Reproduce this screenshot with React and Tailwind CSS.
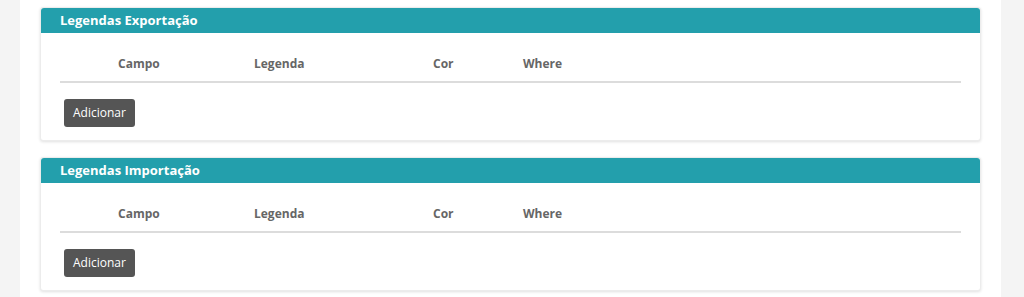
export default function App() {
  const sections = ["Legendas Exportação", "Legendas Importação"];

  return (
    <div
      className="min-h-[297px] bg-[#f4f4f4] px-[20px] pr-[23px]"
      style={{ fontFamily: '"Open Sans", sans-serif' }}
    >
      <div className="bg-white min-h-[297px] px-[20px] pt-[7px] flex flex-col gap-[16px]">
        {sections.map((title) => (
          <div
            key={title}
            className="bg-white rounded-[3px] shadow-[0_1px_3px_rgba(0,0,0,0.12)] border border-[#ececec]"
          >
            {/* Header */}
            <div className="bg-[#239fac] rounded-t-[3px] h-[25px] flex items-center px-[19px]">
              <span className="text-white text-[13px] font-bold">{title}</span>
            </div>

            {/* Table */}
            <div className="px-[19px] pt-[22px] pb-[13px]">
              <div className="flex text-[12px] font-bold text-[#666] pl-[58px] pb-[8px] border-b-2 border-[#dcdcdc]">
                <div className="w-[136px]">Campo</div>
                <div className="w-[179px]">Legenda</div>
                <div className="w-[90px]">Cor</div>
                <div>Where</div>
              </div>
              <button className="mt-[16px] ml-[4px] bg-[#555555] text-white text-[12px] rounded-[3px] h-[28px] px-[9px]">
                Adicionar
              </button>
            </div>
          </div>
        ))}
      </div>
    </div>
  );
}
